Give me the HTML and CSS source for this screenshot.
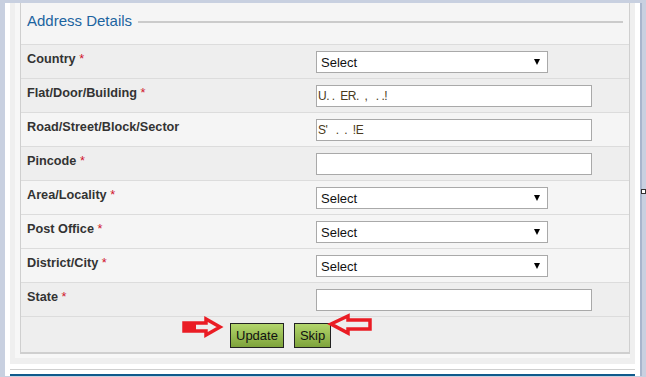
FILE: index.html
```html
<!DOCTYPE html>
<html lang="en">
<head>
  <meta charset="UTF-8">
  <title>Address Details</title>
  <link rel="stylesheet" href="styles.css">
</head>
<body>
  <div class="page">
    <div class="frame">
      <div class="panel">
        <div class="box">
          <div class="legend"><span>Address Details</span><i class="legend-line"></i></div>

          <div class="row dark">
            <label>Country <b class="req">*</b></label>
            <div class="field"><span class="pick"><select><option>Select</option></select></span></div>
          </div>
          <div class="row dark">
            <label>Flat/Door/Building <b class="req">*</b></label>
            <div class="field"><input type="text" class="blur" value="U. .  ER.  ,   . .!"></div>
          </div>
          <div class="row">
            <label>Road/Street/Block/Sector</label>
            <div class="field"><input type="text" class="blur" value="S'   .  .  !E"></div>
          </div>
          <div class="row dark">
            <label>Pincode <b class="req">*</b></label>
            <div class="field"><input type="text"></div>
          </div>
          <div class="row">
            <label>Area/Locality <b class="req">*</b></label>
            <div class="field"><span class="pick"><select><option>Select</option></select></span></div>
          </div>
          <div class="row">
            <label>Post Office <b class="req">*</b></label>
            <div class="field"><span class="pick"><select><option>Select</option></select></span></div>
          </div>
          <div class="row">
            <label>District/City <b class="req">*</b></label>
            <div class="field"><span class="pick"><select><option>Select</option></select></span></div>
          </div>
          <div class="row dark">
            <label>State <b class="req">*</b></label>
            <div class="field"><input type="text"></div>
          </div>

          <div class="actions">
            <!-- red arrows drawn over the button row -->
            <svg class="arrows" width="609" height="36" viewBox="0 0 609 36">
              <polygon points="163,6 185,6 185,2 199,10 185,18 185,14 163,14" />
              <rect x="163" y="7" width="12" height="6" />
              <polygon points="310,7 327,-1 327,3 349,3 349,12 327,12 327,16" />
            </svg>
            <button class="btn">Update</button>
            <button class="btn">Skip</button>
          </div>
        </div>
      </div>
    </div>
    <div class="foot"></div>
  </div>
  <span class="dot"></span>
</body>
</html>
```

FILE: styles.css
```css
body {
  margin: 0;
  background-color: #c8d0e0;
  font-family: "Liberation Sans", Arial, sans-serif;
  color: #333;
}

.page {
  margin: 3px 0 0 5px;
  width: 625px;
  padding: 0 5px;
  background-color: #fff;
  box-shadow: 2px 0 0 #a9b5cc;
}

.frame {
  background-color: #efefef;
  padding: 0 5px 6px 5px;
}

.panel {
  background-color: #f7f7f7;
  padding: 0 0 4px 5px;
}

.box {
  border-left: 1px solid #cfcfcf;
  border-right: 1px solid #cfcfcf;
  border-bottom: 2px solid #cfcfcf;
}

.legend {
  display: flex;
  align-items: center;
  height: 35px;
  padding: 0 6px 6px 6px;
  background-color: #f5f5f5;
  color: #1c64a0;
  font-size: 15px;
}
.legend-line {
  flex: 1;
  height: 2px;
  margin: 3px 0 0 6px;
  background-color: #cbcbcb;
}

.row {
  display: grid;
  grid-template-columns: 288px 1fr;
  height: 33px;
  border-top: 1px solid #dcdcdc;
  background-color: #f5f5f5;
}
.row.dark {
  background-color: #eeeeee;
}
.row label {
  padding: 7px 0 0 6px;
  font-size: 12.7px;
  font-weight: bold;
  line-height: 14px;
}
.req {
  color: #d0112b;
  font-weight: normal;
}

.field {
  padding: 6px 0 0 7px;
}

.pick {
  position: relative;
  display: inline-block;
}
.pick::after {
  content: "";
  position: absolute;
  right: 8px;
  top: 8px;
  border-left: 3.5px solid transparent;
  border-right: 3.5px solid transparent;
  border-top: 6px solid #000;
}

select, input {
  box-sizing: border-box;
  height: 22px;
  border: 1px solid #a9a9a9;
  background-color: #fff;
  font-family: "Liberation Sans", Arial, sans-serif;
  font-size: 13px;
  color: #111;
  border-radius: 0;
  outline: none;
}
select {
  appearance: none;
  width: 232px;
  padding: 0 0 0 4px;
}
input {
  width: 276px;
  padding: 0 0 0 1px;
}
.blur {
  color: #4a3a20;
  font-size: 12px;
  letter-spacing: -0.5px;
}

.actions {
  position: relative;
  display: flex;
  gap: 10px;
  height: 36px;
  padding: 6px 0 0 209px;
  box-sizing: border-box;
  border-top: 1px solid #dcdcdc;
  background-color: #eeeeee;
}
.arrows {
  position: absolute;
  left: 0;
  top: 0;
  overflow: visible;
}
.arrows polygon {
  fill: none;
  stroke: #ea1c24;
  stroke-width: 3.5;
  stroke-linejoin: miter;
}
.arrows rect {
  fill: #ea1c24;
}

.btn {
  height: 25px;
  padding: 0 5px;
  border: 1px solid #222;
  background: linear-gradient(#b3d66c, #7ea33b);
  font-family: "Liberation Sans", Arial, sans-serif;
  font-size: 13px;
  color: #111;
  cursor: pointer;
}

.foot {
  height: 4px;
  margin-top: 5px;
  border-top: 1px solid #cfcfcf;
  border-bottom: 2px solid #0f5a8c;
}

.dot {
  position: absolute;
  left: 641px;
  top: 189px;
  width: 3px;
  height: 3px;
  border: 1px solid #333;
  background-color: #fff;
}
```
